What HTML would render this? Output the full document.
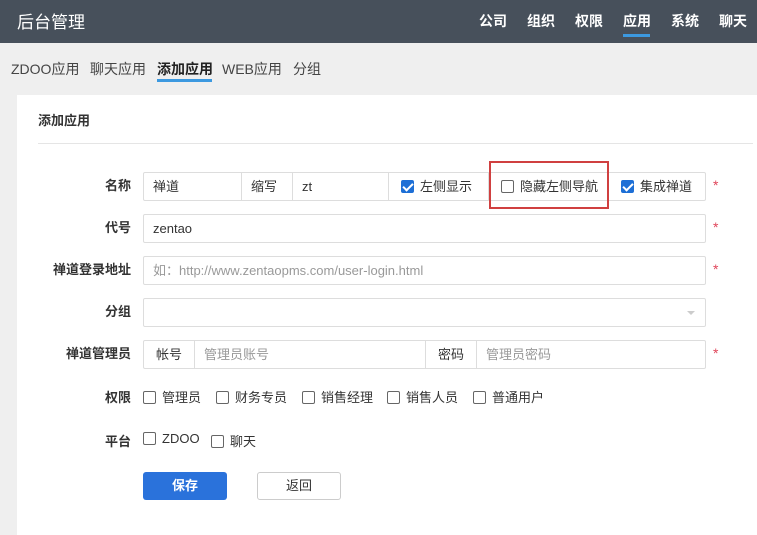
<!DOCTYPE html>
<html><head><meta charset="utf-8"><style>
*{box-sizing:border-box;margin:0;padding:0}
body{width:757px;height:528px;overflow:hidden;background:#efefef;font-family:"Liberation Sans","Noto Sans CJK SC",sans-serif;font-size:13px;color:#333;position:relative}
.hd{position:absolute;left:0;top:0;width:757px;height:43px;background:#47505b;color:#fff}
.hd .t{position:absolute;left:17px;top:8px;font-size:17px}
.hd .n{position:absolute;top:11px;font-size:14px;font-weight:bold}
.ul{position:absolute;height:3px;background:#3c99e0}
.sub{position:absolute;top:59px;font-size:14px;color:#444}
.card{position:absolute;left:17px;top:95px;width:745px;height:440px;background:#fff}
.a{position:absolute}
.lbl{position:absolute;font-weight:bold;text-align:right;width:90px;left:41px;font-size:13px;color:#333}
.box{position:absolute;border:1px solid #ddd;border-radius:2px;height:29px;background:#fff}
.cell{position:absolute;top:0;height:27px;line-height:27px;padding-left:9px;border-right:1px solid #ddd}
.star{position:absolute;left:713px;color:#e0455a;font-size:14px}
.cb{display:inline-block;width:13px;height:13px;border:1px solid #666;border-radius:2px;vertical-align:-2px;margin-right:6px;background:#fff}
.cb.on{background:#1d6fd6;border-color:#1d6fd6;position:relative}
.cb.on:after{content:"";position:absolute;left:3px;top:0px;width:4px;height:8px;border:solid #fff;border-width:0 2px 2px 0;transform:rotate(45deg)}
.ph{color:#999}
</style></head><body>
<div class="hd"><div class="t">后台管理</div>
<div class="n" style="left:479px">公司</div><div class="n" style="left:527px">组织</div><div class="n" style="left:575px">权限</div><div class="n" style="left:623px">应用</div><div class="n" style="left:671px">系统</div><div class="n" style="left:719px">聊天</div>
<div class="ul" style="left:623px;top:34px;width:27px"></div></div>
<div class="sub" style="left:11px">ZDOO应用</div><div class="sub" style="left:90px">聊天应用</div><div class="sub" style="left:157px;font-weight:bold;color:#222">添加应用</div><div class="sub" style="left:222px">WEB应用</div><div class="sub" style="left:293px">分组</div>
<div class="ul" style="left:157px;top:79px;width:55px"></div>
<div class="card"></div>
<div class="a" style="left:38px;top:110px;font-weight:bold;font-size:13px">添加应用</div>
<div class="a" style="left:38px;top:143px;width:715px;height:1px;background:#e5e5e5"></div>

<div class="lbl" style="top:175px">名称</div>
<div class="box" style="left:143px;top:172px;width:563px">
<div class="cell" style="left:0;width:98px">禅道</div>
<div class="cell" style="left:98px;width:51px;background:#fff">缩写</div>
<div class="cell" style="left:149px;width:96px">zt</div>
<div class="cell" style="left:245px;width:100px;padding-left:12px"><span class="cb on"></span>左侧显示</div>
<div class="cell" style="left:345px;width:120px;padding-left:12px"><span class="cb"></span>隐藏左侧导航</div>
<div class="cell" style="left:465px;width:97px;padding-left:12px;border:0"><span class="cb on"></span>集成禅道</div>
</div>
<div class="a" style="left:489px;top:161px;width:120px;height:48px;border:2px solid #d04040"></div>
<div class="star" style="top:177px">*</div>

<div class="lbl" style="top:217px">代号</div>
<div class="box" style="left:143px;top:214px;width:563px"><div class="cell" style="border:0">zentao</div></div>
<div class="star" style="top:219px">*</div>

<div class="lbl" style="top:259px">禅道登录地址</div>
<div class="box" style="left:143px;top:256px;width:563px"><div class="cell ph" style="border:0">如：http://www.zentaopms.com/user-login.html</div></div>
<div class="star" style="top:261px">*</div>

<div class="lbl" style="top:301px">分组</div>
<div class="box" style="left:143px;top:298px;width:563px"><div class="a" style="right:10px;top:12px;border:4px solid transparent;border-top-color:#ccc"></div></div>

<div class="lbl" style="top:343px">禅道管理员</div>
<div class="box" style="left:143px;top:340px;width:563px">
<div class="cell" style="left:0;width:51px;padding-left:12px">帐号</div>
<div class="cell ph" style="left:51px;width:231px">管理员账号</div>
<div class="cell" style="left:282px;width:51px;padding-left:12px">密码</div>
<div class="cell ph" style="left:333px;width:228px;border:0">管理员密码</div>
</div>
<div class="star" style="top:345px">*</div>

<div class="lbl" style="top:387px">权限</div>
<div class="a" style="left:143px;top:387px"><span class="cb"></span>管理员</div>
<div class="a" style="left:216px;top:387px"><span class="cb"></span>财务专员</div>
<div class="a" style="left:302px;top:387px"><span class="cb"></span>销售经理</div>
<div class="a" style="left:387px;top:387px"><span class="cb"></span>销售人员</div>
<div class="a" style="left:473px;top:387px"><span class="cb"></span>普通用户</div>
<div class="lbl" style="top:431px">平台</div>
<div class="a" style="left:143px;top:431px"><span class="cb"></span>ZDOO</div>
<div class="a" style="left:211px;top:431px"><span class="cb"></span>聊天</div>

<div class="a" style="left:143px;top:472px;width:84px;height:28px;background:#2a72db;border-radius:3px;color:#fff;font-weight:bold;text-align:center;line-height:28px">保存</div>
<div class="a" style="left:257px;top:472px;width:84px;height:28px;border:1px solid #ccc;border-radius:3px;text-align:center;line-height:26px;background:#fff">返回</div>
</body></html>
